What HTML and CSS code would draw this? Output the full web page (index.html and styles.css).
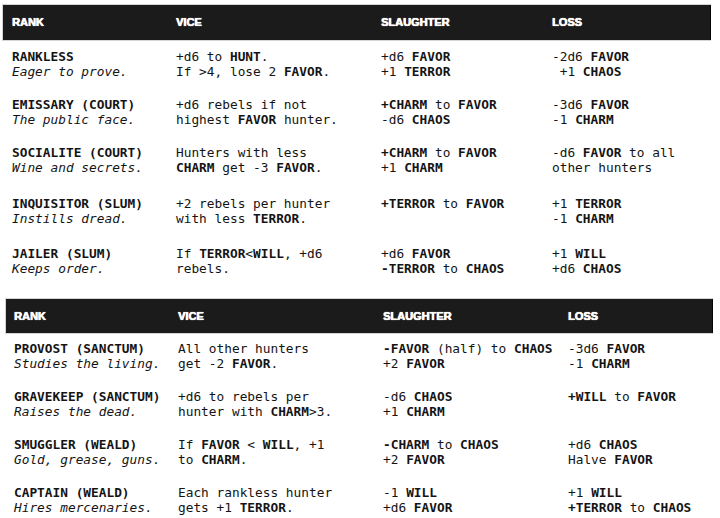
FILE: index.html
```html
<!DOCTYPE html>
<html lang="en">
<head>
<meta charset="utf-8">
<title>Ranks</title>
<link rel="stylesheet" href="styles.css">
</head>
<body>
<main class="page">
  <table class="ranks ranks-a">
    <colgroup>
      <col class="c-rank"><col class="c-vice"><col class="c-slaughter"><col class="c-loss">
    </colgroup>
    <thead>
      <tr><th>RANK</th><th>VICE</th><th>SLAUGHTER</th><th>LOSS</th></tr>
    </thead>
    <tbody>
      <tr class="r-short">
        <td><b>RANKLESS</b><br><i>Eager to prove.</i></td>
        <td>+d6 to <b>HUNT</b>.<br>If &gt;4, lose 2 <b>FAVOR</b>.</td>
        <td>+d6 <b>FAVOR</b><br>+1 <b>TERROR</b></td>
        <td>-2d6 <b>FAVOR</b><br>&nbsp;+1 <b>CHAOS</b></td>
      </tr>
      <tr class="r-short">
        <td><b>EMISSARY (COURT)</b><br><i>The public face.</i></td>
        <td>+d6 rebels if not<br>highest <b>FAVOR</b> hunter.</td>
        <td><b>+CHARM</b> to <b>FAVOR</b><br>-d6 <b>CHAOS</b></td>
        <td>-3d6 <b>FAVOR</b><br>-1 <b>CHARM</b></td>
      </tr>
      <tr class="r-tall">
        <td><b>SOCIALITE (COURT)</b><br><i>Wine and secrets.</i></td>
        <td>Hunters with less<br><b>CHARM</b> get -3 <b>FAVOR</b>.</td>
        <td><b>+CHARM</b> to <b>FAVOR</b><br>+1 <b>CHARM</b></td>
        <td>-d6 <b>FAVOR</b> to all<br>other hunters</td>
      </tr>
      <tr class="r-tall">
        <td><b>INQUISITOR (SLUM)</b><br><i>Instills dread.</i></td>
        <td>+2 rebels per hunter<br>with less <b>TERROR</b>.</td>
        <td><b>+TERROR</b> to <b>FAVOR</b><br>&nbsp;</td>
        <td>+1 <b>TERROR</b><br>-1 <b>CHARM</b></td>
      </tr>
      <tr>
        <td><b>JAILER (SLUM)</b><br><i>Keeps order.</i></td>
        <td>If <b>TERROR</b>&lt;<b>WILL</b>, +d6<br>rebels.</td>
        <td>+d6 <b>FAVOR</b><br><b>-TERROR</b> to <b>CHAOS</b></td>
        <td>+1 <b>WILL</b><br>+d6 <b>CHAOS</b></td>
      </tr>
    </tbody>
  </table>

  <table class="ranks ranks-b">
    <colgroup>
      <col class="c-rank"><col class="c-vice"><col class="c-slaughter"><col class="c-loss">
    </colgroup>
    <thead>
      <tr><th>RANK</th><th>VICE</th><th>SLAUGHTER</th><th>LOSS</th></tr>
    </thead>
    <tbody>
      <tr>
        <td><b>PROVOST (SANCTUM)</b><br><i>Studies the living.</i></td>
        <td>All other hunters<br>get -2 <b>FAVOR</b>.</td>
        <td><b>-FAVOR</b> (half) to <b>CHAOS</b><br>+2 <b>FAVOR</b></td>
        <td>-3d6 <b>FAVOR</b><br>-1 <b>CHARM</b></td>
      </tr>
      <tr>
        <td><b>GRAVEKEEP (SANCTUM)</b><br><i>Raises the dead.</i></td>
        <td>+d6 to rebels per<br>hunter with <b>CHARM</b>&gt;3.</td>
        <td>-d6 <b>CHAOS</b><br>+1 <b>CHARM</b></td>
        <td><b>+WILL</b> to <b>FAVOR</b><br>&nbsp;</td>
      </tr>
      <tr>
        <td><b>SMUGGLER (WEALD)</b><br><i>Gold, grease, guns.</i></td>
        <td>If <b>FAVOR</b> &lt; <b>WILL</b>, +1<br>to <b>CHARM</b>.</td>
        <td><b>-CHARM</b> to <b>CHAOS</b><br>+2 <b>FAVOR</b></td>
        <td>+d6 <b>CHAOS</b><br>Halve <b>FAVOR</b></td>
      </tr>
      <tr>
        <td><b>CAPTAIN (WEALD)</b><br><i>Hires mercenaries.</i></td>
        <td>Each rankless hunter<br>gets +1 <b>TERROR</b>.</td>
        <td>-1 <b>WILL</b><br>+d6 <b>FAVOR</b></td>
        <td>+1 <b>WILL</b><br><b>+TERROR</b> to <b>CHAOS</b></td>
      </tr>
    </tbody>
  </table>
</main>
</body>
</html>
```

FILE: styles.css
```css
* { box-sizing: border-box; }

html, body {
  margin: 0;
  padding: 0;
  background: #ffffff;
}

.page {
  padding-top: 5px;
}

.ranks {
  border-collapse: collapse;
  table-layout: fixed;
  font-family: "DejaVu Sans Mono", "Liberation Mono", monospace;
  font-size: 12.8px;
  line-height: 15px;
  color: #141414;
}

.ranks b { font-weight: 700; }
.ranks i { font-style: italic; }

.ranks thead tr {
  background: #1b1b1b;
  box-shadow: 0 0 0 1px #d4d4d4;
}

.ranks th {
  font-family: "Liberation Sans", Arial, sans-serif;
  font-weight: 700;
  font-size: 11px;
  color: #ffffff;
  text-align: left;
  letter-spacing: 0;
  text-shadow: 0.4px 0 0 #ffffff, 0 0 1px #ffffff;
  vertical-align: middle;
  padding: 0 0 0 9px;
  height: 35px;
}

.ranks th:last-child {
  border-right: 1px solid #050505;
}

.ranks td {
  vertical-align: top;
  white-space: nowrap;
  padding: 9px 0 9px 9px;
  height: 48px;
}

/* table 1 */
.ranks-a {
  width: 707px;
  margin-left: 3px;
}
.ranks-a .c-rank { width: 164px; }
.ranks-a .c-vice { width: 205px; }
.ranks-a .c-slaughter { width: 171px; }
.ranks-a .c-loss { width: 167px; }

.ranks-a tr.r-short td { height: 47.5px; }
.ranks-a tr.r-tall td { height: 50.5px; }

/* table 2 */
.ranks-b {
  width: 706px;
  margin-left: 6px;
  margin-top: 14px;
}
.ranks-b th { height: 34px; padding-left: 8px; }
.ranks-b td { padding-left: 8px; padding-top: 8px; padding-bottom: 10px; }
.ranks-b .c-rank { width: 164px; }
.ranks-b .c-vice { width: 205px; }
.ranks-b .c-slaughter { width: 185px; }
.ranks-b .c-loss { width: 152px; }
```
